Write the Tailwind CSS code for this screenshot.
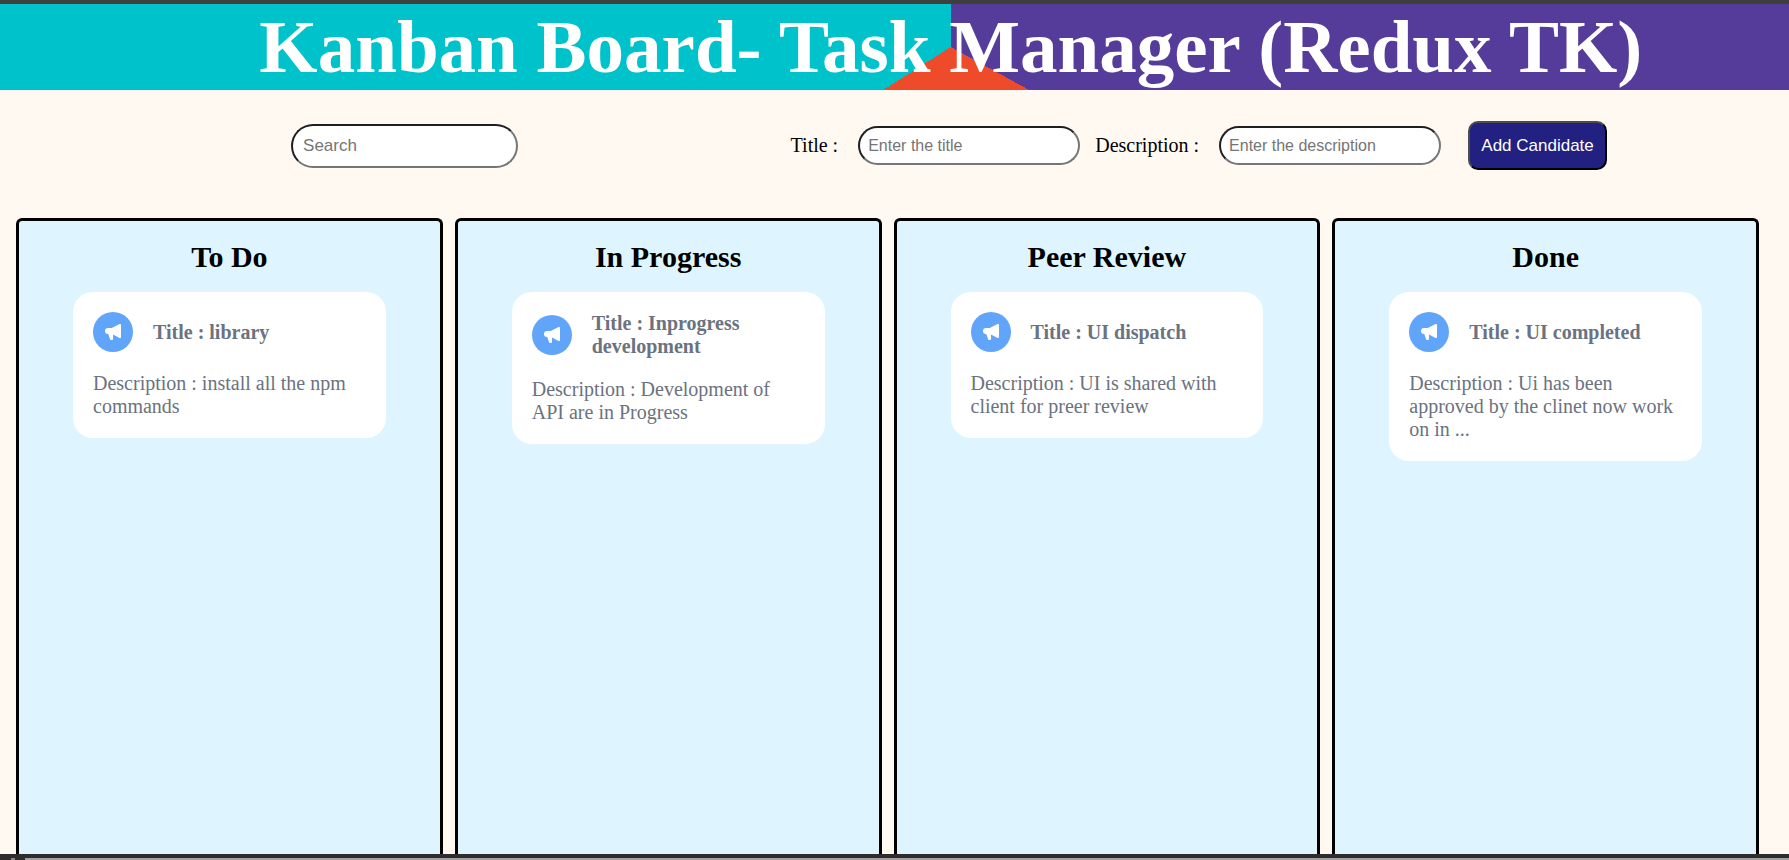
<!DOCTYPE html>
<html lang="en">
<head>
<meta charset="utf-8">
<title>Kanban Board</title>
<script src="https://cdn.jsdelivr.net/npm/@tailwindcss/browser@4"></script>
</head>
<body class="flex h-screen flex-col overflow-hidden bg-[#fff9f2] font-['Liberation_Serif',serif] text-[20px] leading-[23px] text-black">
<svg class="hidden" aria-hidden="true">
  <symbol id="megaphone" viewBox="0 0 20 20"><path fill="currentColor" fill-rule="evenodd" clip-rule="evenodd" d="M18 3a1 1 0 00-1.447-.894L8.763 6H5a3 3 0 000 6h.28l1.771 5.316A1 1 0 008 18h1a1 1 0 001-1v-4.382l6.553 3.276A1 1 0 0018 15V3z"/></symbol>
</svg>
<header class="shrink-0 border-t-4 border-[#3f3f3f] bg-[conic-gradient(at_53.15%_50%,#553c9a_33%,#ee4b2b_33%_66%,#00c2cb_66%)] bg-origin-padding pl-[6.3%]">
  <h1 class="text-center text-[75px] leading-[86px] font-bold whitespace-nowrap text-white">Kanban Board- Task Manager (Redux TK)</h1>
</header>
<div class="flex h-[128px] shrink-0 items-center justify-between pr-[10.17%] pb-[17px] pl-[16.27%]">
  <input type="search" aria-label="Search" placeholder="Search" class="h-[44px] w-[227px] shrink-0 rounded-[22px] border-2 border-t-[#1f1f1f] border-r-[#767676] border-b-[#767676] border-l-[#1f1f1f] bg-white px-[10px] font-['Liberation_Sans',sans-serif] text-[17px] placeholder:text-[#757575]">
  <form class="flex shrink-0 items-center">
    <label for="title" class="mr-[20px]">Title :</label>
    <input id="title" type="text" placeholder="Enter the title" class="mr-[15px] h-[39px] w-[222px] rounded-[20px] border-2 border-t-[#1f1f1f] border-r-[#767676] border-b-[#767676] border-l-[#1f1f1f] bg-white px-[8px] font-['Liberation_Sans',sans-serif] text-[16px] placeholder:text-[#757575]">
    <label for="description" class="mr-[20px]">Description :</label>
    <input id="description" type="text" placeholder="Enter the description" class="mr-[27px] h-[39px] w-[222px] rounded-[20px] border-2 border-t-[#1f1f1f] border-r-[#767676] border-b-[#767676] border-l-[#1f1f1f] bg-white px-[8px] font-['Liberation_Sans',sans-serif] text-[16px] placeholder:text-[#757575]">
    <button type="button" class="h-[49px] w-[139px] rounded-[10px] border-2 border-t-[#4c4c4c] border-r-black border-b-black border-l-[#4c4c4c] bg-[#222080] font-['Liberation_Sans',sans-serif] text-[17px] whitespace-nowrap text-white">Add Candidate</button>
  </form>
</div>
<main class="grid min-h-0 flex-1 grid-cols-4 gap-[12px] overflow-hidden pr-[30px] pl-[16px]">
  <section class="rounded-t-[6px] border-3 border-b-0 border-black bg-[#def5ff] px-[54px] pt-[19px]">
    <h2 class="mb-[18px] text-center text-[30px] leading-[34px] font-bold">To Do</h2>
    <article class="flex flex-col gap-[20px] rounded-[20px] bg-white p-[20px] text-[#6b7280]">
      <div class="flex items-center gap-[20px]">
        <span class="flex size-[40px] shrink-0 items-center justify-center rounded-full bg-[#60a5fa] text-white"><svg class="size-[20px]"><use href="#megaphone"/></svg></span>
        <h3 class="font-bold">Title : library</h3>
      </div>
      <p>Description : install all the npm commands</p>
    </article>
  </section>
  <section class="rounded-t-[6px] border-3 border-b-0 border-black bg-[#def5ff] px-[54px] pt-[19px]">
    <h2 class="mb-[18px] text-center text-[30px] leading-[34px] font-bold">In Progress</h2>
    <article class="flex flex-col gap-[20px] rounded-[20px] bg-white p-[20px] text-[#6b7280]">
      <div class="flex items-center gap-[20px]">
        <span class="flex size-[40px] shrink-0 items-center justify-center rounded-full bg-[#60a5fa] text-white"><svg class="size-[20px]"><use href="#megaphone"/></svg></span>
        <h3 class="font-bold">Title : Inprogress development</h3>
      </div>
      <p>Description : Development of API are in Progress</p>
    </article>
  </section>
  <section class="rounded-t-[6px] border-3 border-b-0 border-black bg-[#def5ff] px-[54px] pt-[19px]">
    <h2 class="mb-[18px] text-center text-[30px] leading-[34px] font-bold">Peer Review</h2>
    <article class="flex flex-col gap-[20px] rounded-[20px] bg-white p-[20px] text-[#6b7280]">
      <div class="flex items-center gap-[20px]">
        <span class="flex size-[40px] shrink-0 items-center justify-center rounded-full bg-[#60a5fa] text-white"><svg class="size-[20px]"><use href="#megaphone"/></svg></span>
        <h3 class="font-bold">Title : UI dispatch</h3>
      </div>
      <p>Description : UI is shared with client for preer review</p>
    </article>
  </section>
  <section class="rounded-t-[6px] border-3 border-b-0 border-black bg-[#def5ff] px-[54px] pt-[19px]">
    <h2 class="mb-[18px] text-center text-[30px] leading-[34px] font-bold">Done</h2>
    <article class="flex flex-col gap-[20px] rounded-[20px] bg-white p-[20px] text-[#6b7280]">
      <div class="flex items-center gap-[20px]">
        <span class="flex size-[40px] shrink-0 items-center justify-center rounded-full bg-[#60a5fa] text-white"><svg class="size-[20px]"><use href="#megaphone"/></svg></span>
        <h3 class="font-bold">Title : UI completed</h3>
      </div>
      <p>Description : Ui has been approved by the clinet now work on in ...</p>
    </article>
  </section>
</main>
<footer class="flex h-[6px] shrink-0 border-t-4 border-[#2f2c2d] bg-[#a39ea0]">
  <div class="flex w-[25px] justify-center bg-[#2f2c2d]"><div class="w-[4px] bg-[#8a8788]"></div></div>
</footer>
</body>
</html>
